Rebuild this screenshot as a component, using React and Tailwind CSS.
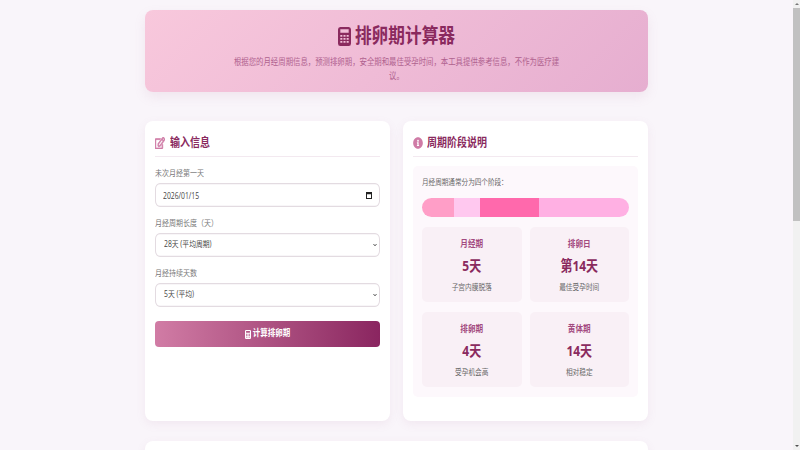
import React from "react";
import { FaRegEdit, FaInfoCircle, FaChevronDown } from "react-icons/fa";

// calculator glyph, drawn taller than wide like the reference
function CalcIcon({ className }) {
  return (
    <svg viewBox="0 0 14 19" preserveAspectRatio="none" className={className} fill="currentColor">
      <path
        fillRule="evenodd"
        d="M2.5 0h9A2.5 2.5 0 0 1 14 2.5v14a2.5 2.5 0 0 1-2.5 2.5h-9A2.5 2.5 0 0 1 0 16.5v-14A2.5 2.5 0 0 1 2.5 0ZM2.5 2.2v3.6h9V2.2ZM2.5 8v1.8h2.2V8ZM5.9 8v1.8h2.2V8ZM9.3 8v1.8h2.2V8ZM2.5 11v1.8h2.2V11ZM5.9 11v1.8h2.2V11ZM9.3 11v1.8h2.2V11ZM2.5 14v1.8h2.2V14ZM5.9 14v1.8h2.2V14ZM9.3 14v1.8h2.2V14Z"
      />
    </svg>
  );
}

function Field({ label, children }) {
  return (
    <div className="mb-[11px]">
      <div className="mb-[3px] h-[12px] text-[7px] leading-[12px] text-[#777]">
        <span className="inline-block scale-y-[1.2]">{label}</span>
      </div>
      {children}
    </div>
  );
}

function SelectBox({ value }) {
  return (
    <div className="relative flex h-[24px] items-center">
      <select
        defaultValue={value}
        className="block h-[20px] w-full scale-y-[1.2] appearance-none rounded-[5px] border border-[#e3dbe1] bg-white pl-[8px] text-[6.8px] text-[#444] outline-none"
      >
        <option>{value}</option>
      </select>
      <FaChevronDown className="pointer-events-none absolute right-[3px] top-[10px] text-[4px] text-[#333]" />
    </div>
  );
}

function PhaseCard({ title, value, desc }) {
  return (
    <div className="flex h-[75px] flex-col items-center rounded-[5px] bg-[#f9f0f6] pt-[11px]">
      <div className="text-[7.6px] font-bold leading-[10px] text-[#a34a80]">
        <span className="inline-block scale-y-[1.2]">{title}</span>
      </div>
      <div className="mt-[8px] text-[12px] font-bold leading-[20px] text-[#8a2a5e]">
        <span className="inline-block scale-y-[1.2]">{value}</span>
      </div>
      <div className="mt-[7px] text-[6.7px] leading-[10px] text-[#666]">
        <span className="inline-block scale-y-[1.2]">{desc}</span>
      </div>
    </div>
  );
}

export default function App() {
  return (
    <div className="flex h-[450px] w-[800px] overflow-hidden bg-[#f9f5fa] font-['Open_Sans','Noto_Sans_CJK_SC',sans-serif]">
      <main className="h-[450px] flex-1 overflow-hidden pt-[10px]">
        <div className="mx-auto w-[503px]">
          {/* Header */}
          <div className="mb-[29px] flex h-[82px] flex-col items-center rounded-[8px] bg-[linear-gradient(135deg,#f8c8dc,#e6aed0)] pt-[13px] shadow-[0_5px_12px_rgba(180,120,160,0.12)]">
            <h1 className="flex h-[26px] items-center gap-[4px] text-[16.7px] font-bold text-[#8a2a5e]">
              <CalcIcon className="h-[19px] w-[13px]" />
              <span className="inline-block scale-y-[1.2]">排卵期计算器</span>
            </h1>
            <p className="mt-[9px] w-[330px] scale-y-[1.2] text-center text-[7.4px] leading-[10.8px] text-[#b0628f]">
              根据您的月经周期信息，预测排卵期，安全期和最佳受孕时间，本工具提供参考信息，不作为医疗建议。
            </p>
          </div>

          <div className="grid grid-cols-2 gap-[13px]">
            {/* Input card */}
            <div className="h-[300px] rounded-[8px] bg-white p-[10px] shadow-[0_3px_10px_rgba(180,120,160,0.1)]">
              <h2 className="flex h-[26px] items-center gap-[5px] border-b border-[#f3e9f0] pb-[2px] text-[10px] font-bold text-[#8a2a5e]">
                <FaRegEdit preserveAspectRatio="none" stroke="currentColor" strokeWidth={30} className="h-[12px] w-[10px] text-[#cf7ba6]" />
                <span className="inline-block scale-y-[1.2]">输入信息</span>
              </h2>
              <div className="mt-[11px]">
                <Field label="未次月经第一天">
                  <div className="relative flex h-[24px] items-center">
                    <input
                      type="text"
                      readOnly
                      value="2026/01/15"
                      className="block h-[20px] w-full scale-y-[1.2] rounded-[5px] border border-[#e3dbe1] bg-white px-[7px] text-[6.8px] text-[#444] outline-none"
                    />
                    <svg viewBox="0 0 6 7" className="pointer-events-none absolute right-[8px] top-[9px] h-[7px] w-[6px]">
                      <path fillRule="evenodd" fill="#222" d="M0 0h6v7H0ZM1 2.2V6h4V2.2Z" />
                    </svg>
                  </div>
                </Field>
                <Field label="月经周期长度（天）">
                  <SelectBox value="28天 (平均周期)" />
                </Field>
                <Field label="月经持续天数">
                  <SelectBox value="5天 (平均)" />
                </Field>
              </div>
              <button className="mt-[14px] flex h-[26px] w-full items-center justify-center gap-[2px] rounded-[4px] bg-gradient-to-r from-[#d17ca5] to-[#8a2560] text-[7.5px] font-bold text-white">
                <CalcIcon className="h-[9px] w-[6px]" />
                <span className="inline-block scale-y-[1.2]">计算排卵期</span>
              </button>
            </div>

            {/* Phases card */}
            <div className="h-[300px] rounded-[8px] bg-white p-[10px] shadow-[0_3px_10px_rgba(180,120,160,0.1)]">
              <h2 className="flex h-[26px] items-center gap-[4px] border-b border-[#f3e9f0] pb-[2px] text-[10px] font-bold text-[#8a2a5e]">
                <FaInfoCircle preserveAspectRatio="none" className="h-[12px] w-[10px] text-[#cf7ba6]" />
                <span className="inline-block scale-y-[1.2]">周期阶段说明</span>
              </h2>
              <div className="mt-[9px] h-[231px] rounded-[5px] bg-[#fdf8fc] px-[9px] pt-[10px]">
                <div className="text-[6.6px] leading-[14px] text-[#666]">
                  <span className="inline-block scale-y-[1.2]">月经周期通常分为四个阶段：</span>
                </div>
                <div className="mt-[8px] flex h-[19px] overflow-hidden rounded-full">
                  <div className="w-[32px] bg-[#ff9ec7]"></div>
                  <div className="w-[26px] bg-[#ffc8ef]"></div>
                  <div className="w-[59px] bg-[#ff69ac]"></div>
                  <div className="flex-1 bg-[#ffb0e3]"></div>
                </div>
                <div className="mt-[10px] grid grid-cols-2 gap-x-[8px] gap-y-[10px]">
                  <PhaseCard title="月经期" value="5天" desc="子宫内膜脱落" />
                  <PhaseCard title="排卵日" value="第14天" desc="最佳受孕时间" />
                  <PhaseCard title="排卵期" value="4天" desc="受孕机会高" />
                  <PhaseCard title="黄体期" value="14天" desc="相对稳定" />
                </div>
              </div>
            </div>
          </div>

          {/* Next card, cut off by the window */}
          <div className="mt-[20px] h-[120px] rounded-[8px] bg-white shadow-[0_3px_10px_rgba(180,120,160,0.1)]"></div>
        </div>
      </main>

      {/* Scrollbar */}
      <aside className="flex h-[450px] w-[7px] flex-col bg-[#f1f1f1]">
        <div className="flex h-[8px] items-center justify-center">
          <div className="h-0 w-0 border-x-[2px] border-b-[2px] border-x-transparent border-b-[#777]"></div>
        </div>
        <div className="h-[213px] bg-[#c1c1c1]"></div>
        <div className="flex-1"></div>
        <div className="flex h-[8px] items-center justify-center">
          <div className="h-0 w-0 border-x-[2px] border-t-[2px] border-x-transparent border-t-[#505050]"></div>
        </div>
      </aside>
    </div>
  );
}
